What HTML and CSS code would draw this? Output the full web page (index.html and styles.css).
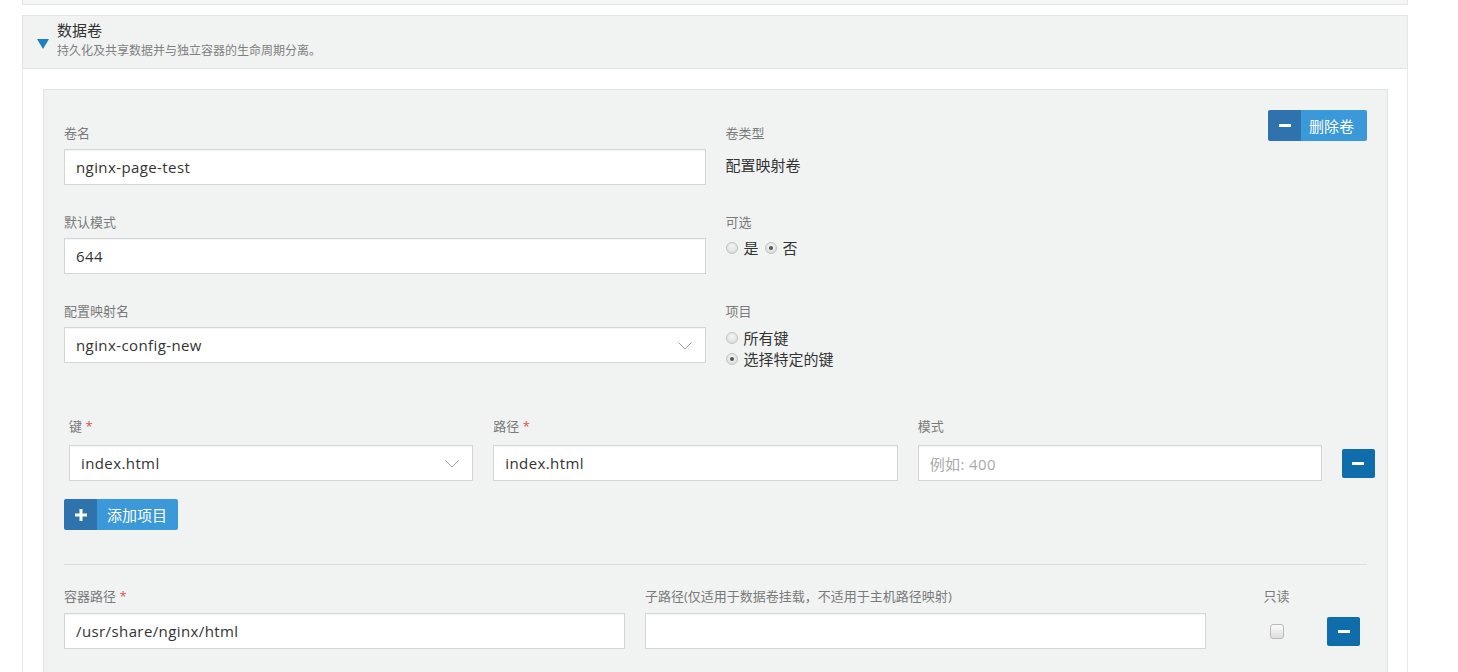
FILE: index.html
```html
<!DOCTYPE html>
<html lang="zh-CN">
<head>
<meta charset="utf-8">
<title>数据卷</title>
<link rel="stylesheet" href="styles.css">
</head>
<body>
<div class="page">
  <div class="top-panel"></div>
  <section class="section">
    <div class="section-head">
      <span class="caret"></span>
      <div class="head-text">
        <div class="head-title">数据卷</div>
        <div class="head-sub">持久化及共享数据并与独立容器的生命周期分离。</div>
      </div>
    </div>
    <div class="section-body">
      <div class="card">
        <div class="form-grid">
          <div class="group">
            <label class="lbl">卷名</label>
            <div class="input"><span class="val">nginx-page-test</span></div>
          </div>
          <div class="group">
            <div class="lbl-row">
              <label class="lbl">卷类型</label>
              <button class="btn btn-del"><span class="btn-ico"><span class="minus"></span></span><span class="btn-txt">删除卷</span></button>
            </div>
            <div class="static">配置映射卷</div>
          </div>
          <div class="group">
            <label class="lbl">默认模式</label>
            <div class="input"><span class="val">644</span></div>
          </div>
          <div class="group">
            <label class="lbl">可选</label>
            <div class="radios-inline">
              <span class="radio"></span><span class="rtxt">是</span>
              <span class="radio checked"></span><span class="rtxt">否</span>
            </div>
          </div>
          <div class="group">
            <label class="lbl">配置映射名</label>
            <div class="input select"><span class="val">nginx-config-new</span>
              <svg class="chev" width="14" height="8" viewBox="0 0 14 8"><polyline points="0.5,0.5 7,7 13.5,0.5" fill="none" stroke="#a0a0a0" stroke-width="1"/></svg>
            </div>
          </div>
          <div class="group">
            <label class="lbl">项目</label>
            <div class="radios-stack">
              <div class="ritem"><span class="radio"></span><span class="rtxt">所有键</span></div>
              <div class="ritem"><span class="radio checked"></span><span class="rtxt">选择特定的键</span></div>
            </div>
          </div>
        </div>

        <div class="key-labels">
          <label class="lbl col">键 <span class="req">*</span></label>
          <label class="lbl col">路径 <span class="req">*</span></label>
          <label class="lbl col">模式</label>
          <span class="btn-space"></span>
        </div>
        <div class="key-row">
          <div class="input select col"><span class="val">index.html</span>
            <svg class="chev" width="14" height="8" viewBox="0 0 14 8"><polyline points="0.5,0.5 7,7 13.5,0.5" fill="none" stroke="#a0a0a0" stroke-width="1"/></svg>
          </div>
          <div class="input col"><span class="val">index.html</span></div>
          <div class="input col"><span class="ph">例如: 400</span></div>
          <button class="btn-sq"><span class="minus"></span></button>
        </div>

        <button class="btn btn-add"><span class="btn-ico"><svg width="12" height="12" viewBox="0 0 12 12"><rect x="4.5" y="0" width="3" height="12" fill="#fff"/><rect x="0" y="4.5" width="12" height="3" fill="#fff"/></svg></span><span class="btn-txt">添加项目</span></button>

        <hr class="sep">

        <div class="mount-labels">
          <label class="lbl mcol">容器路径 <span class="req">*</span></label>
          <label class="lbl mcol">子路径<span class="lat">(</span>仅适用于数据卷挂载，不适用于主机路径映射<span class="lat">)</span></label>
          <label class="lbl ro">只读</label>
          <span class="btn-space2"></span>
        </div>
        <div class="mount-row">
          <div class="input mcol"><span class="val">/usr/share/nginx/html</span></div>
          <div class="input mcol"></div>
          <div class="ro"><span class="check"></span></div>
          <button class="btn-sq"><span class="minus"></span></button>
        </div>
      </div>
    </div>
  </section>
</div>
</body>
</html>
```

FILE: styles.css
```css
* { box-sizing: border-box; }
html, body { margin: 0; padding: 0; background: #fff; }
body {
  font-family: "Open Sans", "Noto Sans CJK SC", sans-serif;
  color: #333;
  height: 672px;
  overflow: hidden;
}
.page { width: 1386px; margin-left: 22px; }

.top-panel {
  height: 5px;
  background: #f4f5f5;
  border: 1px solid #e6e6e6;
  border-top: none;
}

.section { margin-top: 10px; }
.section-head {
  height: 54px;
  background: #f1f3f3;
  border: 1px solid #e3e5e5;
  display: flex;
  align-items: center;
  padding-left: 14px;
}
.caret {
  width: 0; height: 0;
  border-left: 6px solid transparent;
  border-right: 6px solid transparent;
  border-top: 10px solid #1d7fc4;
  margin-top: 3px;
  margin-right: 8px;
}
.head-text { display: flex; flex-direction: column; margin-top: -4px; }
.head-title { font-size: 15px; line-height: 18px; color: #333; }
.head-sub { font-size: 12px; line-height: 16px; color: #808080; margin-top: 4px; }

.section-body {
  border-left: 1px solid #e8eaea;
  border-right: 1px solid #e8eaea;
  padding: 20px 19px 0 20px;
  height: 603px;
}
.card {
  background: #f1f3f3;
  border: 1px solid #e1e4e4;
  border-bottom: none;
  padding: 20px 20px 0 20px;
  height: 583px;
}

.form-grid {
  display: grid;
  grid-template-columns: 1fr 1fr;
  column-gap: 20px;
  padding-top: 14px;
}
.group { margin-bottom: 28px; }
.lbl {
  display: block;
  font-size: 13px;
  line-height: 18px;
  color: #7a7a7a;
  margin-bottom: 7px;
}
.lat { font-family: "Open Sans", sans-serif; }
.req { color: #d9534f; }
.lbl-row { display: flex; justify-content: space-between; align-items: flex-start; }
.lbl-row .btn-del { margin-top: -14px; }

.input {
  height: 36px;
  background: #fff;
  border: 1px solid #d2d6d6;
  box-shadow: inset 0 1px 1px rgba(0,0,0,0.04);
  display: flex;
  align-items: center;
  padding-left: 11px;
  font-size: 15px;
  color: #333;
  position: relative;
}
.val { line-height: 20px; letter-spacing: 0.4px; }
.ph { color: #aaa; letter-spacing: 0.4px; }
.select .chev { position: absolute; right: 13px; top: 14px; }

.static { font-size: 15px; line-height: 20px; color: #333; margin-top: 6px; }

.radio {
  width: 12px; height: 12px;
  border-radius: 50%;
  border: 1px solid #c2c2c2;
  background: radial-gradient(circle at 50% 35%, #f4f4f4 0%, #d8d8d8 100%);
  display: inline-block;
  position: relative;
  flex: none;
}
.radio.checked::after {
  content: "";
  position: absolute;
  left: 3px; top: 3px;
  width: 4px; height: 4px;
  border-radius: 50%;
  background: #555;
}
.rtxt { font-size: 15px; line-height: 20px; color: #333; }
.radios-inline { display: flex; align-items: center; margin-top: 3px; }
.radios-inline .radio { margin-right: 6px; }
.radios-inline .rtxt { margin-right: 6px; }
.radios-stack { margin-top: 3px; }
.ritem { display: flex; align-items: center; height: 21px; }
.ritem .radio { margin-right: 6px; }

.key-labels, .key-row {
  display: flex;
  margin-left: 5px;
  margin-right: -8px;
  gap: 20px;
  align-items: center;
}
.key-labels { margin-top: 20px; }
.key-labels .lbl { margin-bottom: 10px; }
.col { flex: 1; min-width: 0; }
.btn-space { width: 33px; flex: none; }
.btn-sq {
  width: 33px; height: 29px;
  flex: none;
  border: none;
  border-radius: 2px;
  background: #0f6dab;
  display: flex;
  align-items: center;
  justify-content: center;
  padding: 0;
}
.minus { width: 12px; height: 3px; background: #fff; display: block; }

.btn {
  display: inline-flex;
  border: none;
  padding: 0;
  height: 31px;
  font-family: inherit;
  border-radius: 2px;
  overflow: hidden;
}
.btn-ico {
  width: 33px;
  background: #2e73ad;
  display: flex; align-items: center; justify-content: center;
}
.btn-txt {
  background: #3b99d9;
  color: #fff;
  font-size: 15px;
  display: flex; align-items: center;
  padding: 0 8px 0 8px;
}
.btn-del { width: 99px; }
.btn-del .btn-txt { flex: 1; }
.btn-add { width: 114px; margin-top: 18px; }
.btn-add .btn-txt { flex: 1; padding-left: 10px; }

.sep {
  border: none;
  border-top: 1px solid #dadddd;
  margin: 34px 0 0 0;
  height: 0;
}

.mount-labels, .mount-row {
  display: flex;
  align-items: center;
  padding-right: 7px;
}
.mount-labels { margin-top: 22px; }
.mount-labels .lbl { margin-bottom: 8px; }
.mcol { flex: 1; min-width: 0; margin-right: 20px; }
.ro { width: 101px; flex: none; text-align: center; display: flex; justify-content: center; }
.btn-space2 { width: 33px; flex: none; }
.check {
  width: 14px; height: 15px;
  border: 1px solid #b9b9b9;
  border-radius: 3px;
  background: linear-gradient(#fbfbfb, #dedede);
  display: block;
}
```
